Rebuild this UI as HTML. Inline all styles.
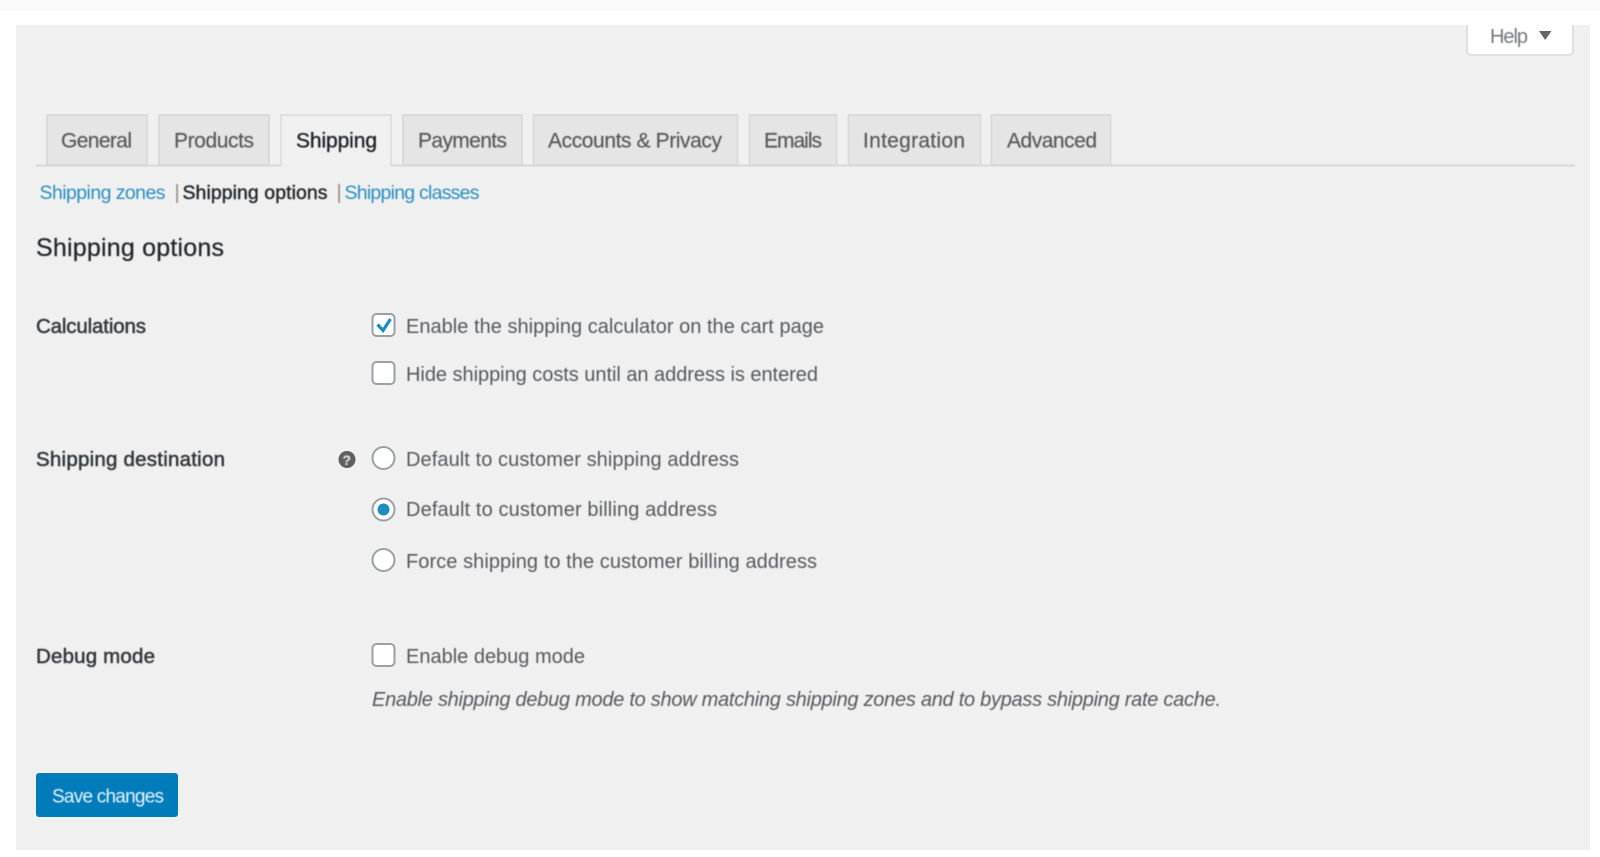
<!DOCTYPE html>
<html><head><meta charset="utf-8"><title>Shipping options</title>
<style>
html,body{margin:0;padding:0;width:1600px;height:857px;overflow:hidden;background:#fff}
svg{display:block}
text{font-family:"Liberation Sans",sans-serif;font-size:20px;fill:#55595e;filter:url(#b)}
.tab{fill:#e5e5e5;stroke:#d8d8d8;stroke-width:1.600}
.t{font-size:21px;fill:#5a5a5a;stroke:#5a5a5a;stroke-width:.2px}
.b{fill:#32373c;font-size:20.5px;stroke:#32373c;stroke-width:.5px}
.l{fill:#2a8fc0;font-size:19.5px}
.box{fill:#fff;stroke:#99a0a7;stroke-width:2}
</style></head><body>
<svg width="1600" height="857" viewBox="0 0 1600 857" xmlns="http://www.w3.org/2000/svg">
<defs><filter id="b" x="-5%" y="-30%" width="110%" height="160%"><feGaussianBlur stdDeviation="0.4"/></filter></defs>
<rect width="1600" height="857" fill="#fff"/>
<rect width="1600" height="11" fill="#fbfbfb"/>
<rect x="16" y="25" width="1574" height="825" fill="#f0f0f0"/>

<path d="M1467 25V51a4 4 0 0 0 4 4H1569a4 4 0 0 0 4-4V25" fill="#fff" stroke="#dcdfe3" stroke-width="2"/>
<text x="1490" y="43" textLength="38" style="fill:#72777c">Help</text>
<path d="M1539 31H1551.500L1545.200 40Z" fill="#666"/>

<path d="M36 165.500H1575" stroke="#d8d8d8" stroke-width="2"/>
<rect class="tab" x="47" y="115" width="100" height="50"/>
<rect class="tab" x="159" y="115" width="110" height="50"/>
<path d="M281 166V115H391V166" fill="#f0f0f0" stroke="#dcdcdc" stroke-width="1.600"/>
<rect x="282" y="160" width="108" height="8" fill="#f0f0f0"/>
<rect class="tab" x="403" y="115" width="119" height="50"/>
<rect class="tab" x="533.500" y="115" width="204" height="50"/>
<rect class="tab" x="749.500" y="115" width="87" height="50"/>
<rect class="tab" x="848.500" y="115" width="132" height="50"/>
<rect class="tab" x="991.500" y="115" width="119" height="50"/>

<text class="t" x="61" y="147.500" textLength="71">General</text>
<text class="t" x="174" y="147.500" textLength="80">Products</text>
<text class="t" x="296" y="147.500" textLength="81" style="fill:#1f2328;stroke:#1f2328;stroke-width:.35px">Shipping</text>
<text class="t" x="418" y="147.500" textLength="89">Payments</text>
<text class="t" x="548" y="147.500" textLength="174">Accounts &amp; Privacy</text>
<text class="t" x="764" y="147.500" textLength="58">Emails</text>
<text class="t" x="863" y="147.500" textLength="102">Integration</text>
<text class="t" x="1007" y="147.500" textLength="90">Advanced</text>

<text class="l" x="39.500" y="199" textLength="126">Shipping zones</text>
<text x="174.500" y="199" style="fill:#9a8a80">|</text>
<text x="182.500" y="199" textLength="145" style="fill:#23282d;stroke:#23282d;stroke-width:.4px;font-size:19.5px">Shipping options</text>
<text x="336.500" y="199" style="fill:#9a8a80">|</text>
<text class="l" x="344.500" y="199" textLength="135">Shipping classes</text>

<text x="36" y="256" textLength="188" style="font-size:25px;fill:#23282d;stroke:#23282d;stroke-width:.25px">Shipping options</text>

<text class="b" x="36" y="333" textLength="110">Calculations</text>
<text class="b" x="36" y="466" textLength="189">Shipping destination</text>
<text class="b" x="36" y="663" textLength="119">Debug mode</text>

<rect class="box" x="372.500" y="314" width="22" height="22" rx="4"/>
<path d="M377.500 324.500L383 330.500L390.500 319" fill="none" stroke="#1e8cbe" stroke-width="3.200"/>
<rect class="box" x="372.500" y="362" width="22" height="22" rx="4"/>
<rect class="box" x="372.500" y="644" width="22" height="22" rx="4"/>

<circle cx="347" cy="459.500" r="8.500" fill="#5f5f5f"/>
<text x="342.500" y="465" style="font-size:14px;font-weight:700;fill:#f0f0f0">?</text>

<circle class="box" cx="383.500" cy="458" r="11"/>
<circle class="box" cx="383.500" cy="509.500" r="11"/>
<circle cx="383.500" cy="509.500" r="6" fill="#1e8cbe"/>
<circle class="box" cx="383.500" cy="560" r="11"/>

<text x="406" y="333" textLength="418">Enable the shipping calculator on the cart page</text>
<text x="406" y="381" textLength="412">Hide shipping costs until an address is entered</text>
<text x="406" y="466" textLength="333">Default to customer shipping address</text>
<text x="406" y="516" textLength="311">Default to customer billing address</text>
<text x="406" y="568" textLength="411">Force shipping to the customer billing address</text>
<text x="406" y="663" textLength="179">Enable debug mode</text>
<text x="372" y="706" textLength="849" style="font-style:italic">Enable shipping debug mode to show matching shipping zones and to bypass shipping rate cache.</text>

<rect x="36" y="773" width="142" height="44" rx="3" fill="#007cba"/>
<text x="52" y="802.500" textLength="112" style="fill:#e8f4fa;font-size:19px">Save changes</text>
</svg>
</body></html>
